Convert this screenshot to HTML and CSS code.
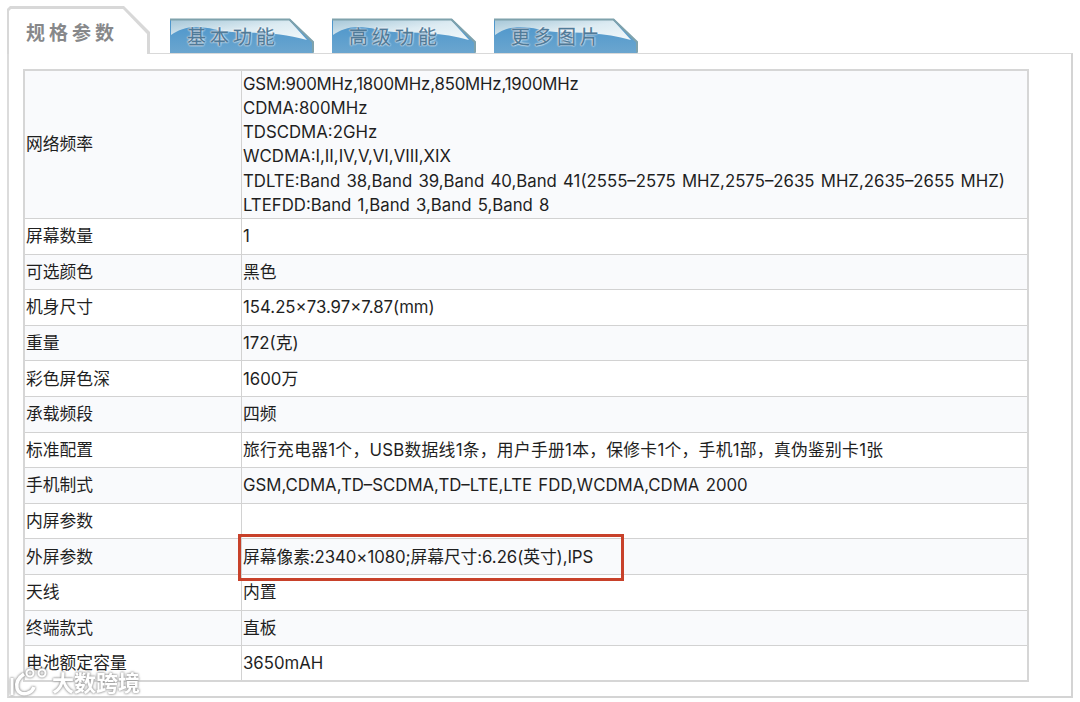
FILE: index.html
```html
<!DOCTYPE html>
<html lang="zh">
<head>
<meta charset="utf-8">
<title>规格参数</title>
<link rel="stylesheet" href="styles.css">
</head>
<body>
<svg class="defs" width="0" height="0" aria-hidden="true">
  <defs>
    <linearGradient id="sheen" x1="0" y1="0" x2="1" y2="1">
      <stop offset="0" stop-color="#a6c7d8"/>
      <stop offset="0.5" stop-color="#dcebf2"/>
      <stop offset="1" stop-color="#f2f8fa"/>
    </linearGradient>
    <linearGradient id="base" x1="0" y1="0" x2="0" y2="1">
      <stop offset="0" stop-color="#4a94cb"/>
      <stop offset="1" stop-color="#6ba6cf"/>
    </linearGradient>
    <symbol id="tabshape" viewBox="0 0 144 35">
      <path d="M0 35V1H120L143.500 24V35Z" fill="url(#base)"/>
      <path d="M1 2V17C8 12 16 9 26 9C40 9 48 13 62 14C84 15 110 14 137 22L119 2Z" fill="url(#sheen)"/>
      <path d="M0 1.500H119.500L143 24V34.500" fill="none" stroke="#7fa2ac" stroke-width="2"/>
    </symbol>
  </defs>
</svg>
<main class="page">
  <nav class="tabs">
    <div class="tab tab-active">规格参数</div>
    <div class="tab"><svg class="tab-bg"><use href="#tabshape"/></svg><span class="tab-label">基本功能</span></div>
    <div class="tab"><svg class="tab-bg"><use href="#tabshape"/></svg><span class="tab-label">高级功能</span></div>
    <div class="tab"><svg class="tab-bg"><use href="#tabshape"/></svg><span class="tab-label">更多图片</span></div>
  </nav>
  <section class="panel">
    <table class="specs">
      <tr class="tall"><th>网络频率</th><td><span class="tight">GSM:900MHz,1800MHz,850MHz,1900MHz</span><br>CDMA:800MHz<br>TDSCDMA:2GHz<br>WCDMA:I,II,IV,V,VI,VIII,XIX<br>TDLTE:Band 38,Band 39,Band 40,Band 41(2555–2575 MHZ,2575–2635 MHZ,2635–2655 MHZ)<br>LTEFDD:Band 1,Band 3,Band 5,Band 8</td></tr>
      <tr><th>屏幕数量</th><td>1</td></tr>
      <tr><th>可选颜色</th><td>黑色</td></tr>
      <tr><th>机身尺寸</th><td>154.25×73.97×7.87(mm)</td></tr>
      <tr><th>重量</th><td>172(克)</td></tr>
      <tr><th>彩色屏色深</th><td>1600万</td></tr>
      <tr><th>承载频段</th><td>四频</td></tr>
      <tr><th>标准配置</th><td class="loose">旅行充电器1个，USB数据线1条，用户手册1本，保修卡1个，手机1部，真伪鉴别卡1张</td></tr>
      <tr><th>手机制式</th><td>GSM,CDMA,TD–SCDMA,TD–LTE,LTE FDD,WCDMA,CDMA 2000</td></tr>
      <tr><th>内屏参数</th><td></td></tr>
      <tr><th>外屏参数</th><td class="snug">屏幕像素:2340×1080;屏幕尺寸:6.26(英寸),IPS</td></tr>
      <tr><th>天线</th><td>内置</td></tr>
      <tr><th>终端款式</th><td>直板</td></tr>
      <tr><th>电池额定容量</th><td>3650mAH</td></tr>
    </table>
  </section>
</main>
<div class="highlight"></div>
<div class="watermark">
  <svg class="wm-logo" viewBox="0 0 40 30" aria-hidden="true">
    <path d="M3 10V27" fill="none" stroke="#fff" stroke-width="3"/>
    <path d="M15 6C9 10 7 15 8 20C9 25 14 27 19 25C22 24 24 22 25 19" fill="none" stroke="#fff" stroke-width="3.500"/>
    <circle cx="21" cy="5" r="3.500" fill="none" stroke="#fff" stroke-width="2"/>
    <circle cx="33" cy="5" r="3.500" fill="none" stroke="#fff" stroke-width="2"/>
  </svg>
  <span class="wm-text">大数跨境</span>
</div>
</body>
</html>
```
FILE: styles.css
```css
html, body {
  margin: 0;
  padding: 0;
  background: #fff;
}
body {
  position: relative;
  width: 1080px;
  height: 702px;
  overflow: hidden;
  font-family: "Inter", "Noto Sans CJK SC", sans-serif;
  font-size: 16.800px;
  color: #1f1f1f;
}
.defs {
  position: absolute;
}
.page {
  display: flex;
  flex-direction: column;
  padding: 6px 7px 0 7px;
  width: 1066px;
}
.tabs {
  display: flex;
  align-items: flex-end;
  height: 47px;
}
.tab {
  position: relative;
  width: 143px;
  height: 35px;
  margin-right: 19px;
}
.tab-bg {
  position: absolute;
  left: 0;
  top: 0;
  width: 144px;
  height: 35px;
}
.tab-label {
  position: relative;
  display: block;
  padding: 8px 0 0 17px;
  font-size: 19px;
  line-height: 24px;
  letter-spacing: 4px;
  color: #4f7a98;
  -webkit-text-stroke: 0.3px #4f7a98;
  text-shadow: 0 0 1px #fff, 0 0 2px #fff, 0 0 2px #fff;
}
.tab-active {
  width: 144px;
  height: 48px;
  margin-right: 19px;
  margin-bottom: -1px;
  box-sizing: border-box;
  padding: 14px 0 0 19px;
  font-size: 19px;
  line-height: 28px;
  font-weight: bold;
  letter-spacing: 4px;
  color: #87888a;
  background: #d8d8d8;
  clip-path: polygon(0 3px, 3px 0, 117px 0, 143px 26px, 143px 100%, 0 100%);
  z-index: 1;
}
.tab-active::before {
  content: "";
  position: absolute;
  z-index: -1;
  left: 2px;
  top: 3px;
  right: 4px;
  bottom: 0;
  background: #fff;
  clip-path: polygon(0 2px, 2px 0, 114px 0, 138px 25px, 138px 100%, 0 100%);
}
.panel {
  box-sizing: border-box;
  height: 645px;
  border-top: 1px solid #d9d9d9;
  border-left: 2px solid #dcdcdc;
  border-right: 2px solid #d4d4d4;
  border-bottom: 2px solid #d4d4d4;
  padding: 15px 0 0 14px;
}
.specs {
  width: 1006px;
  height: 613px;
  table-layout: fixed;
  border-collapse: collapse;
  border: 2px solid #d6d6d6;
  word-spacing: 1.500px;
}
.specs tr {
  height: 35.620px;
}
.specs tr:nth-child(odd) {
  background: #f9fafc;
}
.specs tr:nth-child(even) {
  background: #fff;
}
.specs tr.tall {
  height: 148.400px;
}
.specs th,
.specs td {
  padding: 0 1px;
  border: 1px solid #d2d2d2;
  font-weight: normal;
  text-align: left;
  line-height: 24.200px;
  vertical-align: middle;
}
.specs th {
  width: 214px;
}
.specs .tight {
  letter-spacing: -0.180px;
}
.specs .loose {
  letter-spacing: 0.270px;
}
.specs .snug {
  letter-spacing: -0.070px;
}
.highlight {
  position: absolute;
  left: 238px;
  top: 534px;
  width: 386px;
  height: 47px;
  box-sizing: border-box;
  border: 3px solid #c8412a;
}
.watermark {
  position: absolute;
  left: 9px;
  top: 668px;
  display: flex;
  align-items: center;
  gap: 3px;
  filter: drop-shadow(0 0 1px #8e8e8e) drop-shadow(0 0 1px #c4c4c4);
}
.wm-logo {
  width: 40px;
  height: 30px;
}
.wm-text {
  font-size: 22px;
  line-height: 30px;
  color: #fff;
  font-weight: bold;
}
```
